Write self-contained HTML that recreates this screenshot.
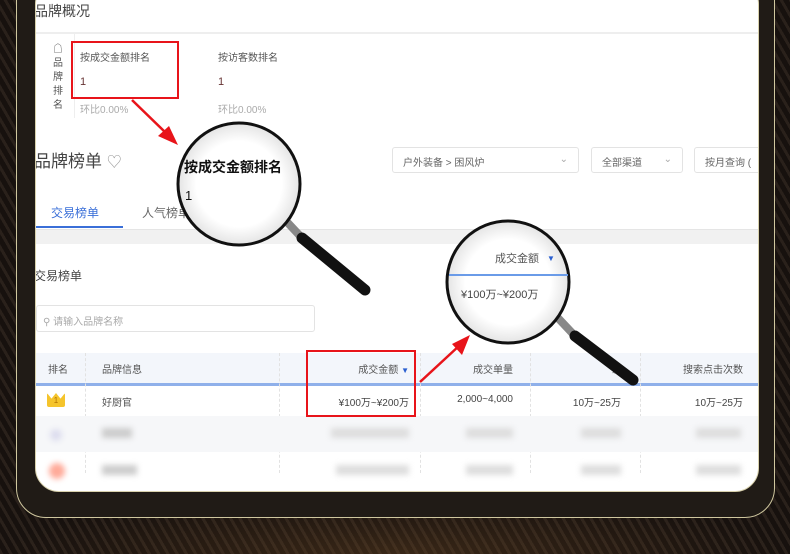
<!DOCTYPE html>
<html><head><meta charset="utf-8"><style>
*{margin:0;padding:0;box-sizing:border-box}
body{width:790px;height:554px;overflow:hidden;position:relative;font-family:"Liberation Sans","Noto Sans CJK SC",sans-serif;background:#1e1713;}
.bg{position:absolute;inset:0;background:repeating-linear-gradient(60deg,#2a211b 0 3px,#17110e 3px 8px);}
.glow{position:absolute;left:0;right:0;bottom:0;height:60px;background:radial-gradient(ellipse at 50% 100%,rgba(120,80,40,.35),transparent 70%)}
.bezel{position:absolute;left:16px;top:-30px;width:759px;height:548px;background:#201b16;border:1.5px solid #cfc79f;border-radius:30px}
.screen{position:absolute;left:35px;top:-20px;width:724px;height:512px;background:#fff;border:1.5px solid #d8d1ac;border-radius:24px;overflow:hidden}
.a{position:absolute;white-space:nowrap}
.g{color:#555}
</style></head><body>
<div class="bg"></div><div class="glow"></div>
<div class="bezel"></div>
<div class="screen">
 <div style="position:absolute;left:0;top:0;width:100%;height:100%">
 <div class="a g" style="left:-2px;top:20px;font-size:14px;color:#444">品牌概况</div>
 <div class="a" style="left:0;top:51px;width:100%;height:2px;background:#eee"></div>
 <div class="a" style="left:17px;top:62px;font-size:10px;color:#555;line-height:14px;white-space:normal;width:12px">☖品牌排名</div>
 <div class="a" style="left:38px;top:53px;width:1px;height:84px;background:#eee"></div>
 <div class="a" style="left:44px;top:68px;font-size:10px;color:#555">按成交金额排名</div>
 <div class="a" style="left:44px;top:95px;font-size:11px;color:#633">1</div>
 <div class="a" style="left:44px;top:120px;font-size:10px;color:#aaa">环比0.00%</div>
 <div class="a" style="left:182px;top:68px;font-size:10px;color:#555">按访客数排名</div>
 <div class="a" style="left:182px;top:95px;font-size:11px;color:#633">1</div>
 <div class="a" style="left:182px;top:120px;font-size:10px;color:#aaa">环比0.00%</div>
 <div class="a" style="left:-2px;top:166px;font-size:17px;color:#444">品牌榜单 <span style="color:#999;font-size:15px">♡</span></div>
 <div class="a" style="left:356px;top:166px;width:187px;height:26px;border:1px solid #e3e3e3;border-radius:3px;font-size:10px;color:#666;padding:6px 10px">户外装备 &gt; 困风炉<span style="float:right;color:#aaa">⌄</span></div>
 <div class="a" style="left:555px;top:166px;width:92px;height:26px;border:1px solid #e3e3e3;border-radius:3px;font-size:10px;color:#666;padding:6px 10px">全部渠道<span style="float:right;color:#aaa">⌄</span></div>
 <div class="a" style="left:658px;top:166px;width:80px;height:26px;border:1px solid #e3e3e3;border-radius:3px;font-size:10px;color:#666;padding:6px 10px">按月查询 (</div>
 <div class="a" style="left:15px;top:223px;font-size:12px;color:#3a6fd8">交易榜单</div>
 <div class="a" style="left:106px;top:223px;font-size:12px;color:#666">人气榜单</div>
 <div class="a" style="left:0;top:245px;width:87px;height:2px;background:#3a6fd8"></div>
 <div class="a" style="left:0;top:248px;width:100%;height:15px;background:#f1f1f1;border-top:1px solid #e5e5e5"></div>
 <div class="a" style="left:-2px;top:286px;font-size:12px;color:#444">交易榜单</div>
 <div class="a" style="left:0;top:324px;width:279px;height:27px;border:1px solid #e3e3e3;border-radius:3px;font-size:10px;color:#aaa;padding:7px 6px">⚲ 请输入品牌名称</div>
 <div class="a" style="left:0;top:372px;width:100%;height:30px;background:#f3f6fb"></div>
 <div class="a" style="left:0;top:402px;width:100%;height:3px;background:#8fb0ea"></div>
 <div class="a" style="left:12px;top:380px;font-size:10px;color:#555">排名</div>
 <div class="a" style="left:66px;top:380px;font-size:10px;color:#555">品牌信息</div>
 <div class="a" style="left:280px;top:380px;width:93px;text-align:right;font-size:10px;color:#555">成交金额 <span style="color:#2a5fd0;font-size:8px">▼</span></div>
 <div class="a" style="left:400px;top:380px;width:77px;text-align:right;font-size:10px;color:#555">成交单量</div>
 <div class="a" style="left:540px;top:380px;width:45px;text-align:right;font-size:10px;color:#555">访</div>
 <div class="a" style="left:600px;top:380px;width:107px;text-align:right;font-size:10px;color:#555">搜索点击次数</div>
 <div class="a" style="left:49px;top:372px;height:120px;border-left:1px dashed #e2e2e2"></div>
 <div class="a" style="left:243px;top:372px;height:120px;border-left:1px dashed #e2e2e2"></div>
 <div class="a" style="left:384px;top:372px;height:120px;border-left:1px dashed #e2e2e2"></div>
 <div class="a" style="left:494px;top:372px;height:120px;border-left:1px dashed #e2e2e2"></div>
 <div class="a" style="left:604px;top:372px;height:120px;border-left:1px dashed #e2e2e2"></div>
 <div class="a" style="left:11px;top:412px;width:18px;height:14px;background:#f5c42c;border-radius:2px;font-size:8px;color:#b07000;text-align:center;line-height:16px;clip-path:polygon(0 0,25% 40%,50% 0,75% 40%,100% 0,100% 100%,0 100%)">1</div>
 <div class="a" style="left:66px;top:413px;font-size:10px;color:#555">好厨官</div>
 <div class="a" style="left:270px;top:413px;width:103px;text-align:right;font-size:10px;color:#444">¥100万~¥200万</div>
 <div class="a" style="left:400px;top:413px;width:77px;text-align:right;font-size:10px;color:#444">2,000~4,000</div>
 <div class="a" style="left:520px;top:413px;width:65px;text-align:right;font-size:10px;color:#444">10万~25万</div>
 <div class="a" style="left:630px;top:413px;width:77px;text-align:right;font-size:10px;color:#444">10万~25万</div>
 <div class="a" style="left:0;top:435px;width:100%;height:36px;background:#f6f7f9"></div>
 <div style="filter:blur(3px)">
  <div class="a" style="left:14px;top:448px;width:12px;height:12px;border-radius:6px;background:#dde"></div>
  <div class="a" style="left:66px;top:447px;width:30px;height:10px;background:#ccc"></div>
  <div class="a" style="left:295px;top:447px;width:78px;height:10px;background:#ddd"></div>
  <div class="a" style="left:430px;top:447px;width:47px;height:10px;background:#ddd"></div>
  <div class="a" style="left:545px;top:447px;width:40px;height:10px;background:#ddd"></div>
  <div class="a" style="left:660px;top:447px;width:45px;height:10px;background:#ddd"></div>
  <div class="a" style="left:13px;top:482px;width:16px;height:16px;border-radius:8px;background:#fa9"></div>
  <div class="a" style="left:66px;top:484px;width:35px;height:10px;background:#ccc"></div>
  <div class="a" style="left:300px;top:484px;width:73px;height:10px;background:#ddd"></div>
  <div class="a" style="left:430px;top:484px;width:47px;height:10px;background:#ddd"></div>
  <div class="a" style="left:545px;top:484px;width:40px;height:10px;background:#ddd"></div>
  <div class="a" style="left:660px;top:484px;width:45px;height:10px;background:#ddd"></div>
 </div>
 </div>
</div>
<!-- overlays -->
<div class="a" style="left:71px;top:41px;width:108px;height:58px;border:2px solid #e8141a"></div>
<div class="a" style="left:306px;top:350px;width:110px;height:67px;border:2px solid #e8141a"></div>
<svg class="a" style="left:0;top:0" width="790" height="554">
 <defs><radialGradient id="lens" cx="50%" cy="50%" r="50%"><stop offset="70%" stop-color="#fff"/><stop offset="100%" stop-color="#e4e4e4"/></radialGradient></defs>
 <line x1="132" y1="100" x2="166" y2="133" stroke="#e8141a" stroke-width="2.5"/>
 <polygon points="178,145 158,136 169,126" fill="#e8141a"/>
 <line x1="420" y1="382" x2="460" y2="345" stroke="#e8141a" stroke-width="2.5"/>
 <polygon points="470,335 462,355 452,344" fill="#e8141a"/>
 <!-- magnifier 1 -->
 <line x1="287" y1="222" x2="302" y2="238" stroke="#888" stroke-width="8"/>
 <line x1="302" y1="238" x2="365" y2="290" stroke="#111" stroke-width="11" stroke-linecap="round"/>
 <circle cx="239" cy="184" r="61" fill="url(#lens)" stroke="#111" stroke-width="3"/>
 <text x="184" y="172" font-size="14" font-weight="bold" fill="#111" font-family="Liberation Sans,Noto Sans CJK SC,sans-serif">按成交金额排名</text>
 <text x="185" y="200" font-size="13" fill="#111" font-family="Liberation Sans,sans-serif">1</text>
 <!-- magnifier 2 -->
 <line x1="558" y1="318" x2="575" y2="336" stroke="#888" stroke-width="8"/>
 <line x1="575" y1="336" x2="633" y2="380" stroke="#111" stroke-width="11" stroke-linecap="round"/>
 <circle cx="508" cy="282" r="61" fill="url(#lens)" stroke="#111" stroke-width="3"/>
 <text x="495" y="262" font-size="11" fill="#555" font-family="Liberation Sans,Noto Sans CJK SC,sans-serif">成交金额</text>
 <text x="547" y="261" font-size="8" fill="#2a5fd0">▼</text>
 <line x1="449" y1="275" x2="568" y2="275" stroke="#6a9be8" stroke-width="2"/>
 <text x="461" y="298" font-size="11" fill="#444" font-family="Liberation Sans,Noto Sans CJK SC,sans-serif">¥100万~¥200万</text>
</svg>
</body></html>
